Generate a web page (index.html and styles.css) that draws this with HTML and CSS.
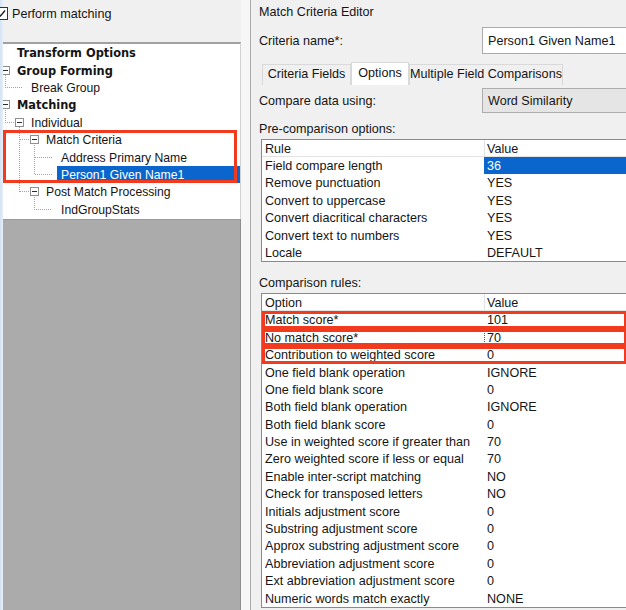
FILE: index.html
```html
<!DOCTYPE html>
<html>
<head>
<meta charset="utf-8">
<title>Match Criteria Editor</title>
<link rel="stylesheet" href="styles.css">
</head>
<body>
<div class="app">
  <aside class="left">
    <div class="perform">
      <svg class="chk" width="13" height="13" viewBox="0 0 13 13"><rect x="0.5" y="0.5" width="12" height="12" fill="#fff" stroke="#333"/><path d="M3 6.5 L5.5 9 L10 3.5" fill="none" stroke="#222" stroke-width="1.5"/></svg>
      <span>Perform matching</span>
    </div>
    <div class="tree">
      <svg class="tree-lines" width="238" height="175" viewBox="0 0 238 175" shape-rendering="crispEdges">
        <g fill="none" stroke="#a3a3a3" stroke-width="1" stroke-dasharray="1 1">
          <path d="M2.5 31 V43.5 H19"/>
          <path d="M2.5 65.5 V78.5 H12"/>
          <path d="M16.5 83 V147.5"/>
          <path d="M16.5 95.5 H27"/>
          <path d="M16.5 147.5 H27"/>
          <path d="M31.5 100.5 V130.5"/>
          <path d="M31.5 113.5 H49"/>
          <path d="M31.5 130.5 H49"/>
          <path d="M31.5 152.5 V165.5 H49"/>
        </g>
      </svg>
      <div class="node l0"><span class="exp"></span><span class="lbl b">Transform Options</span></div>
      <div class="node l0"><span class="exp"><i class="box"></i></span><span class="lbl b">Group Forming</span></div>
      <div class="node l1"><span class="exp"></span><span class="lbl">Break Group</span></div>
      <div class="node l0"><span class="exp"><i class="box"></i></span><span class="lbl b">Matching</span></div>
      <div class="node l1"><span class="exp"><i class="box"></i></span><span class="lbl">Individual</span></div>
      <div class="node l2"><span class="exp"><i class="box"></i></span><span class="lbl">Match Criteria</span></div>
      <div class="node l3"><span class="exp"></span><span class="lbl">Address Primary Name</span></div>
      <div class="node l3"><span class="exp"></span><span class="lbl sel">Person1 Given Name1</span></div>
      <div class="node l2"><span class="exp"><i class="box"></i></span><span class="lbl">Post Match Processing</span></div>
      <div class="node l3"><span class="exp"></span><span class="lbl">IndGroupStats</span></div>
      <div class="mark"></div>
    </div>
    <div class="gray"></div>
  </aside>
  <div class="split"></div>
  <main class="editor">
    <div class="title">Match Criteria Editor</div>
    <div class="field-row name-row">
      <label>Criteria name*:</label>
      <div class="input">Person1 Given Name1</div>
    </div>
    <div class="tabs">
      <div class="tab t1">Criteria Fields</div>
      <div class="tab t2 active">Options</div>
      <div class="tab t3">Multiple Field Comparisons</div>
    </div>
    <div class="field-row compare-row">
      <label>Compare data using:</label>
      <div class="select">Word Similarity</div>
    </div>
    <div class="section">Pre-comparison options:</div>
    <div class="grid">
      <div class="hd"><span>Rule</span><span>Value</span></div>
      <div class="r"><span>Field compare length</span><span class="cur">36</span></div>
      <div class="r"><span>Remove punctuation</span><span>YES</span></div>
      <div class="r"><span>Convert to uppercase</span><span>YES</span></div>
      <div class="r"><span>Convert diacritical characters</span><span>YES</span></div>
      <div class="r"><span>Convert text to numbers</span><span>YES</span></div>
      <div class="r"><span>Locale</span><span>DEFAULT</span></div>
    </div>
    <div class="section second">Comparison rules:</div>
    <div class="grid">
      <div class="hd"><span>Option</span><span>Value</span></div>
      <div class="r hl"><span>Match score*</span><span>101</span></div>
      <div class="r hl"><span>No match score*</span><span class="focus">70</span></div>
      <div class="r hl"><span>Contribution to weighted score</span><span>0</span></div>
      <div class="r"><span>One field blank operation</span><span>IGNORE</span></div>
      <div class="r"><span>One field blank score</span><span>0</span></div>
      <div class="r"><span>Both field blank operation</span><span>IGNORE</span></div>
      <div class="r"><span>Both field blank score</span><span>0</span></div>
      <div class="r"><span>Use in weighted score if greater than</span><span>70</span></div>
      <div class="r"><span>Zero weighted score if less or equal</span><span>70</span></div>
      <div class="r"><span>Enable inter-script matching</span><span>NO</span></div>
      <div class="r"><span>Check for transposed letters</span><span>NO</span></div>
      <div class="r"><span>Initials adjustment score</span><span>0</span></div>
      <div class="r"><span>Substring adjustment score</span><span>0</span></div>
      <div class="r"><span>Approx substring adjustment score</span><span>0</span></div>
      <div class="r"><span>Abbreviation adjustment score</span><span>0</span></div>
      <div class="r"><span>Ext abbreviation adjustment score</span><span>0</span></div>
      <div class="r"><span>Numeric words match exactly</span><span>NONE</span></div>
    </div>
  </main>
</div>
</body>
</html>
```
FILE: styles.css
```css
* { box-sizing: border-box; }
html, body { margin: 0; padding: 0; }
body {
  width: 626px;
  height: 610px;
  overflow: hidden;
  background: #f0f0f0;
  font-family: "Liberation Sans", Arial, sans-serif;
  font-size: 12.6px;
  color: #151515;
}
.app {
  display: flex;
  height: 610px;
  background: linear-gradient(to right, #d4e3f2 0, #e6eef8 3px, transparent 3px);
}

/* left pane */
.left {
  width: 241px;
  flex: none;
  display: flex;
  flex-direction: column;
}
.perform {
  height: 42px;
  margin-left: 3px;
  padding-top: 7px;
  display: flex;
  align-items: flex-start;
  gap: 4px;
  line-height: 15px;
}
.chk { margin-left: -8px; flex: none; }
.tree {
  position: relative;
  margin-left: 3px;
  height: 177px;
  border-top: 2px solid #a0a0a0;
  border-right: 1px solid #d2d2d2;
  background: #fff;
  overflow: hidden;
  font-size: 12.2px;
}
.tree-lines {
  position: absolute;
  left: 0;
  top: 0;
  z-index: 0;
}
.node {
  position: relative;
  z-index: 1;
  display: flex;
  align-items: center;
  height: 17.4px;
  white-space: nowrap;
}
.lbl { padding-top: 1px; }
.l1 { padding-left: 12px; }
.l2 { padding-left: 27px; }
.l3 { padding-left: 42px; }
.exp {
  width: 16px;
  flex: none;
  display: flex;
  align-items: center;
}
.l0 .exp { margin-left: -2px; }
.box {
  position: relative;
  width: 9px;
  height: 9px;
  border: 1px solid #8e8f8f;
  background: #fff;
}
.box::after {
  content: "";
  position: absolute;
  left: 1px;
  top: 3px;
  width: 5px;
  height: 1px;
  background: #2b2b2b;
}
.b {
  font-family: "DejaVu Sans", Verdana, sans-serif;
  font-weight: bold;
  font-size: 11.4px;
}
.sel {
  flex: 1;
  align-self: stretch;
  display: flex;
  align-items: center;
  margin-left: -4px;
  padding-left: 4px;
  background: #0a66cc;
  color: #fff;
}
.mark {
  position: absolute;
  left: 0;
  top: 86px;
  width: 234px;
  height: 53px;
  border: 3px solid #f23a1e;
  z-index: 2;
}
.gray {
  flex: 1;
  margin-left: 3px;
  background: #ababab;
  border-top: 1px solid #999;
  border-right: 1px solid #8e8e8e;
}
.split {
  width: 10px;
  flex: none;
  background: #f6f6f6;
  border-right: 1px solid #a9a9a9;
}

/* editor */
.editor {
  flex: 1;
  min-width: 0;
  padding-left: 8px;
  display: flex;
  flex-direction: column;
}
.title { height: 22px; line-height: 24px; }
.field-row { display: flex; align-items: center; }
.field-row label { width: 223px; flex: none; }
.name-row { margin-top: 5px; height: 27px; }
.input {
  flex: 1;
  height: 27px;
  margin-right: -6px;
  background: #fff;
  border: 1px solid #ababab;
  padding-left: 5px;
  line-height: 26px;
  white-space: nowrap;
}
.tabs {
  display: flex;
  align-items: flex-end;
  height: 23px;
  margin: 8px 0 0 3px;
}
.tab {
  height: 21px;
  border: 1px solid #d9d9d9;
  border-bottom: none;
  text-align: center;
  line-height: 19px;
  white-space: nowrap;
}
.tab.active { height: 23px; background: #fff; line-height: 20px; }
.t1 { width: 89px; }
.t2 { width: 58px; }
.t3 { width: 154px; }
.compare-row { margin-top: 3px; height: 25px; }
.select {
  flex: 1;
  height: 25px;
  margin-right: -6px;
  background: #e5e5e5;
  border: 1px solid #adadad;
  padding-left: 5px;
  line-height: 24px;
  white-space: nowrap;
}
.section { margin-top: 6px; line-height: 18px; padding-top: 1px; height: 18px; }
.section.second { margin-top: 11px; }
.grid {
  margin: 2px -2px 0 2px;
  border: 1px solid #8a8a8a;
  background: #fff;
}
.hd {
  display: grid;
  grid-template-columns: 222px 1fr;
  height: 17px;
  line-height: 16px;
  border-bottom: 1px solid #e3e3e3;
}
.hd span { padding-left: 3px; padding-top: 1px; }
.hd span + span { border-left: 1px solid #e3e3e3; padding-left: 2px; }
.r {
  display: grid;
  grid-template-columns: 222px 1fr;
  height: 17.4px;
  white-space: nowrap;
}
.r span {
  padding-left: 3px;
  padding-top: 2px;
  line-height: 15.4px;
  overflow: hidden;
}
.cur { background: #0a66cc; color: #fff; }
.focus { outline: 1px dotted #555; outline-offset: -1px; }
.hl {
  position: relative;
  z-index: 1;
  outline: 3px solid #f23a1e;
  outline-offset: -3px;
}
```
